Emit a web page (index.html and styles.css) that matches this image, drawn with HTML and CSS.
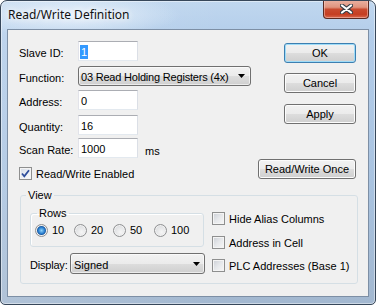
FILE: index.html
```html
<!DOCTYPE html>
<html lang="en">
<head>
    <meta charset="UTF-8">
    <title>Read/Write Definition</title>
    <link rel="stylesheet" href="styles.css">
</head>
<body>
    <div class="window">
        <div class="titlebar">
            <span class="title">Read/Write Definition</span>
            <div class="close">
                <svg width="13" height="10" viewBox="0 0 13 10">
                    <path d="M2 1.5 L11 8.5 M11 1.5 L2 8.5" stroke="#3a3f48" stroke-width="4.2" stroke-linecap="round"/>
                    <path d="M2 1.5 L11 8.5 M11 1.5 L2 8.5" stroke="#ffffff" stroke-width="2.2" stroke-linecap="round"/>
                </svg>
            </div>
        </div>

        <div class="client">
            <div class="top">
                <div class="form">
                    <span class="lbl">Slave ID:</span>
                    <div class="textbox"><span class="sel">1</span></div>

                    <span class="lbl">Function:</span>
                    <div class="combo wide">
                        <span class="tight">03 Read Holding Registers (4x)</span>
                        <svg class="arrow" width="7" height="4" viewBox="0 0 7 4"><polygon points="0,0 7,0 3.5,4" fill="#000"/></svg>
                    </div>

                    <span class="lbl">Address:</span>
                    <div class="textbox">0</div>

                    <span class="lbl">Quantity:</span>
                    <div class="textbox">16</div>

                    <span class="lbl">Scan Rate:</span>
                    <div class="field">
                        <div class="textbox">1000</div>
                        <span class="unit">ms</span>
                    </div>

                    <label class="check span2">
                        <span class="box checked">
                            <svg width="11" height="11" viewBox="0 0 11 11"><path d="M2 5.5 L4.3 8.3 L9 2.2" fill="none" stroke="#2e4e9c" stroke-width="1.8"/></svg>
                        </span>
                        <span>Read/Write Enabled</span>
                    </label>
                </div>

                <div class="buttons">
                    <div class="btn default">OK</div>
                    <div class="btn">Cancel</div>
                    <div class="btn">Apply</div>
                    <div class="btn long">Read/Write Once</div>
                </div>
            </div>

            <fieldset class="group view">
                <legend>View</legend>
                <div class="view-body">
                    <div class="view-left">
                        <fieldset class="group rows">
                            <legend>Rows</legend>
                            <div class="radios">
                                <label class="opt"><span class="radio on"></span>10</label>
                                <label class="opt"><span class="radio"></span>20</label>
                                <label class="opt"><span class="radio"></span>50</label>
                                <label class="opt"><span class="radio"></span>100</label>
                            </div>
                        </fieldset>
                        <div class="display-row">
                            <span class="lbl-d">Display:</span>
                            <div class="combo short">
                                <span>Signed</span>
                                <svg class="arrow" width="7" height="4" viewBox="0 0 7 4"><polygon points="0,0 7,0 3.5,4" fill="#000"/></svg>
                            </div>
                        </div>
                    </div>
                    <div class="view-right">
                        <label class="check"><span class="box"></span><span>Hide Alias Columns</span></label>
                        <label class="check"><span class="box"></span><span>Address in Cell</span></label>
                        <label class="check"><span class="box"></span><span>PLC Addresses (Base 1)</span></label>
                    </div>
                </div>
            </fieldset>
        </div>
    </div>
</body>
</html>
```

FILE: styles.css
```css
* {
    box-sizing: border-box;
}

body {
    margin: 0;
    background: #fff;
    font-family: "Liberation Sans", Arial, sans-serif;
    font-size: 11px;
    color: #000;
}

.window {
    width: 376px;
    height: 305px;
    border: 1px solid #37475a;
    border-radius: 7px 7px 5px 5px;
    background:
        radial-gradient(ellipse 110px 22px at 70px 14px, rgba(235,244,252,0.9), rgba(235,244,252,0) 100%),
        linear-gradient(to right, rgba(255,255,255,0.15), rgba(255,255,255,0) 60%),
        linear-gradient(to bottom, #c0d7ef 0%, #b3cdea 12%, #a9c3e0 60%, #a3b8d0 100%);
    box-shadow: inset 0 0 0 1px rgba(255,255,255,0.45);
    display: flex;
    flex-direction: column;
    overflow: hidden;
}

.titlebar {
    height: 28px;
    flex: none;
    display: flex;
    justify-content: space-between;
    align-items: flex-start;
    padding-left: 7px;
}

.title {
    font-family: "Noto Sans", "Liberation Sans", sans-serif;
    font-size: 12px;
    line-height: 16px;
    margin-top: 6px;
    color: #111;
    text-shadow: 0 0 6px #fff, 0 0 10px rgba(255,255,255,0.8);
}

.close {
    width: 46px;
    height: 19px;
    margin-top: -1px;
    margin-right: 6px;
    border: 1px solid #5b2a22;
    border-top: none;
    border-radius: 0 0 4px 4px;
    background: linear-gradient(to bottom, #eab2a3 0%, #e0947f 40%, #c94a2f 52%, #c53e22 80%, #d8684e 100%);
    box-shadow: inset 0 0 0 1px rgba(255,220,210,0.45);
    display: flex;
    align-items: center;
    justify-content: center;
}

.client {
    flex: 1;
    margin: 0 6px 7px;
    background: #f0f0f0;
    border: 1px solid #7d8fa5;
    padding: 11px 11px 0 11px;
}

.top {
    height: 147px;
    display: flex;
    justify-content: space-between;
}

.form {
    display: grid;
    grid-template-columns: 59px auto;
    grid-template-rows: 25px 24px 25px 23px 29px 20px;
    align-items: start;
}

.lbl {
    line-height: 16px;
    padding-top: 4px;
}

.textbox {
    width: 60px;
    height: 20px;
    background: #fff;
    border: 1px solid;
    border-color: #abadb3 #dbdfe6 #e3e9ef #e2e3ea;
    padding: 2px 0 0 2px;
    line-height: 16px;
}

.sel {
    display: inline-block;
    background: #3399ff;
    color: #fff;
    padding: 0 1px;
    margin-left: -1px;
    line-height: 14px;
    margin-top: 1px;
    vertical-align: top;
}

.field {
    display: flex;
    align-items: flex-start;
}

.unit {
    margin-left: 7px;
    line-height: 16px;
    padding-top: 5px;
}

.combo {
    height: 20px;
    border: 1px solid #707070;
    border-radius: 3px;
    background: linear-gradient(to bottom, #f2f2f2 0%, #ebebeb 50%, #dddddd 51%, #cfcfcf 100%);
    box-shadow: inset 0 0 0 1px rgba(255,255,255,0.6);
    display: flex;
    justify-content: space-between;
    align-items: center;
    padding: 0 5px 0 2px;
    line-height: 16px;
}

.combo span {
    padding-top: 2px;
}

.tight {
    letter-spacing: -0.2px;
}

.combo.wide {
    width: 173px;
}

.combo.short {
    width: 135px;
    height: 21px;
    padding: 0 4px 0 3px;
}

.arrow {
    flex: none;
}

.check {
    display: flex;
    align-items: flex-start;
    gap: 4px;
    line-height: 14px;
}

.span2 {
    grid-column: 1 / 3;
}

.box {
    width: 13px;
    height: 13px;
    flex: none;
    border: 1px solid #8e8f8f;
    background: linear-gradient(135deg, #cbcfd5 0%, #e6e8eb 50%, #f7f7f7 100%);
    box-shadow: inset 0 0 0 1px #f4f4f4;
    display: flex;
    align-items: center;
    justify-content: center;
}

.box.checked {
    background: linear-gradient(135deg, #d4dbe6 0%, #eef1f6 60%, #fafbfc 100%);
}

.buttons {
    display: grid;
    grid-template-rows: 30px 31px 55px 20px;
    justify-items: end;
    align-items: start;
    padding-top: 2px;
    padding-right: 1px;
}

.btn {
    width: 72px;
    height: 20px;
    border: 1px solid #707070;
    border-radius: 3px;
    background: linear-gradient(to bottom, #f2f2f2 0%, #ebebeb 50%, #dddddd 51%, #cfcfcf 100%);
    box-shadow: inset 0 0 0 1px #fcfcfc;
    text-align: center;
    line-height: 18px;
}

.btn.default {
    border-color: #3c7fb1;
    box-shadow: inset 0 0 0 1px #9fdcf8;
}

.btn.long {
    width: 98px;
}

.group {
    margin: 0;
    padding: 0;
    border: 1px solid #d5dfe5;
    border-radius: 3px;
    min-width: 0;
}

.group legend {
    padding: 0 2px;
    line-height: 14px;
}

.view {
    width: 338px;
    height: 96px;
    margin-left: 1px;
}

.view legend {
    margin-left: 5px;
}

.view-body {
    display: flex;
    gap: 7px;
    padding: 4px 0 0 9px;
}

.view-left {
    width: 175px;
}

.rows {
    width: 174px;
    height: 41px;
    box-shadow: inset 1px 1px 0 #fff;
}

.rows legend {
    margin-left: 6px;
}

.radios {
    height: 26px;
    padding: 4px 0 0 4px;
    display: grid;
    grid-template-columns: 39px 39px 41px auto;
    align-items: start;
}

.opt {
    display: flex;
    align-items: flex-start;
    gap: 4px;
    line-height: 13px;
}

.radio {
    width: 13px;
    height: 13px;
    flex: none;
    border-radius: 50%;
    border: 1px solid #8f9092;
    background: radial-gradient(circle at 60% 65%, #f6f6f6 0%, #e2e3e5 55%, #cbcdd0 100%);
    box-shadow: inset 0 0 0 1px #f2f2f2;
}

.radio.on {
    background:
        radial-gradient(circle at 50% 50%, #8fd3fb 0%, #2a7fcf 40%, #0d4b94 58%, rgba(13,75,148,0) 62%),
        radial-gradient(circle at 60% 65%, #f6f6f6 0%, #e2e3e5 55%, #cbcdd0 100%);
}

.display-row {
    display: flex;
    align-items: flex-start;
    margin-top: 6px;
}

.lbl-d {
    width: 40px;
    line-height: 16px;
    padding-top: 4px;
    letter-spacing: -0.2px;
}

.view-right {
    display: grid;
    grid-template-rows: 24px 23px 14px;
    padding-top: 6px;
}
```
